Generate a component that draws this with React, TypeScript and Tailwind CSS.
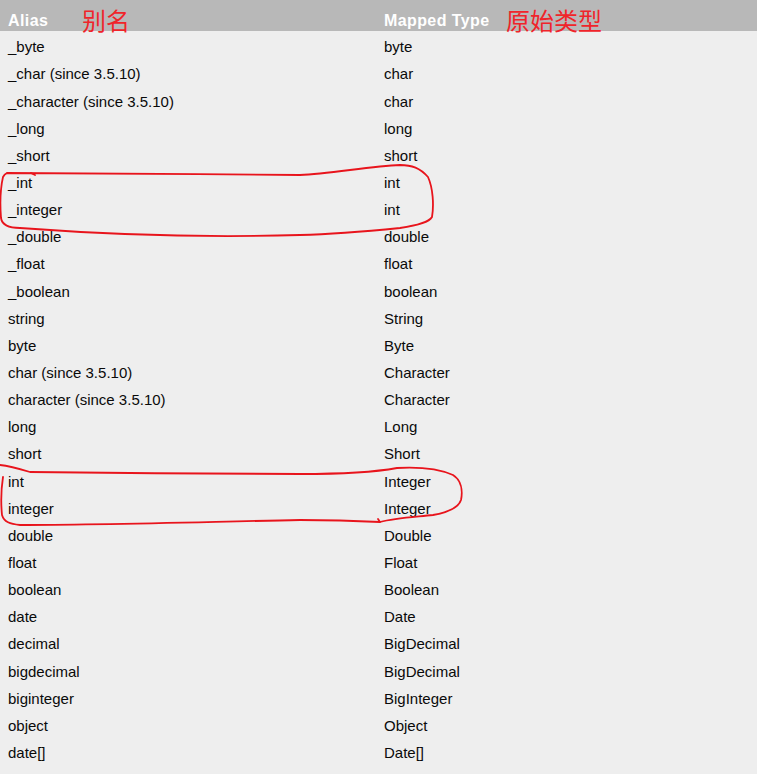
import React from "react";

// alias -> mapped type rows, top to bottom
const rows: [string, string][] = [
  ["_byte", "byte"],
  ["_char (since 3.5.10)", "char"],
  ["_character (since 3.5.10)", "char"],
  ["_long", "long"],
  ["_short", "short"],
  ["_int", "int"],
  ["_integer", "int"],
  ["_double", "double"],
  ["_float", "float"],
  ["_boolean", "boolean"],
  ["string", "String"],
  ["byte", "Byte"],
  ["char (since 3.5.10)", "Character"],
  ["character (since 3.5.10)", "Character"],
  ["long", "Long"],
  ["short", "Short"],
  ["int", "Integer"],
  ["integer", "Integer"],
  ["double", "Double"],
  ["float", "Float"],
  ["boolean", "Boolean"],
  ["date", "Date"],
  ["decimal", "BigDecimal"],
  ["bigdecimal", "BigDecimal"],
  ["biginteger", "BigInteger"],
  ["object", "Object"],
  ["date[]", "Date[]"],
];

const Marks = () => (
  <svg
    className="pointer-events-none absolute left-0 top-0"
    width={758}
    height={774}
    fill="none"
    stroke="#e8141c"
    strokeWidth={1.8}
    strokeLinecap="round"
    strokeLinejoin="round"
  >
    {/* loop round _int / _integer */}
    <path d="M 7 173 C 60 173, 200 174, 300 175 C 330 174, 370 166, 400 165 C 412 165, 420 168, 428 177 C 433 188, 434 205, 432 217 C 429 222, 420 225, 400 228 C 370 231, 340 234, 300 235 C 200 238, 100 234, 20 228 C 10 228, 2 225, 1 218 C 0 205, 0 190, 3 177 C 4 175, 5 174, 7 173" />
    <path d="M 31 173 L 35 175" />
    {/* loop round int / integer */}
    <path d="M 0 465 C 10 466, 20 469, 30 472 C 100 473, 250 474, 300 474 C 340 474, 370 473, 397 468 C 415 467, 435 467, 453 475 C 461 480, 463 490, 461 500 C 459 506, 450 512, 433 515 C 415 517, 395 518, 380 522 C 360 521, 330 520, 300 520 C 200 522, 100 525, 20 525 C 10 524, 4 522, 2 515 C 1 505, 1 490, 3 477" />
    <path d="M 380 522 L 378 519" />
  </svg>
);

export default function App() {
  return (
    <div className="relative h-[774px] w-[758px] overflow-hidden bg-white font-['Liberation_Sans',Arial,sans-serif]">
      <div className="h-[774px] w-[757px] bg-[#eeeeee]">
        <div className="grid h-[31px] grid-cols-[376px_1fr] bg-[#b8b8b8] text-[16px] font-bold tracking-[0.4px] text-white">
          <div className="flex items-center pl-2 pt-[9px]">Alias</div>
          <div className="flex items-center pl-2 pt-[9px]">Mapped Type</div>
        </div>
        <div className="pt-[3px]">
          {rows.map(([alias, type], i) => (
            <div
              key={i}
              className="grid h-[27.15px] grid-cols-[376px_1fr] text-[15px] text-[#0a0a0a]"
            >
              <div className="flex items-center pl-2">{alias}</div>
              <div className="flex items-center pl-2">{type}</div>
            </div>
          ))}
        </div>
      </div>

      {/* red handwritten notes */}
      <span className="absolute left-[82px] top-[6px] font-['Noto_Sans_CJK_SC',sans-serif] text-[24px] leading-[28px] text-[#f0242a]">
        别名
      </span>
      <span className="absolute left-[506px] top-[6px] font-['Noto_Sans_CJK_SC',sans-serif] text-[24px] leading-[28px] text-[#f0242a]">
        原始类型
      </span>
      <Marks />
    </div>
  );
}
